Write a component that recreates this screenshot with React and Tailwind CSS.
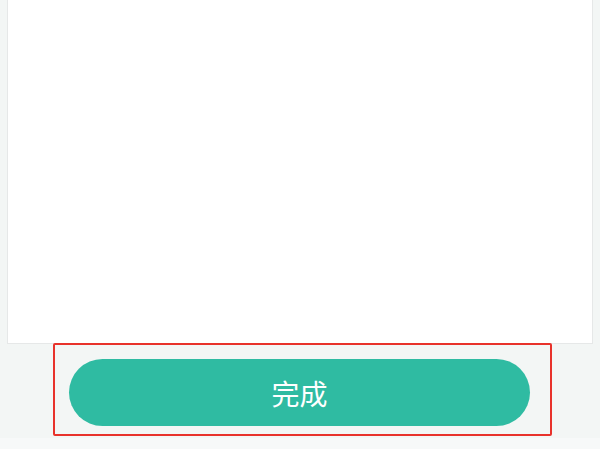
export default function App() {
  return (
    <div className="w-[600px] h-[449px] bg-[#f3f6f5] overflow-hidden flex flex-col" style={{ fontFamily: '"Noto Sans CJK SC", "Noto Sans", sans-serif' }}>
      <div className="mx-[7px] h-[344px] shrink-0 bg-white border border-t-0 border-[#e6e8e8]" />
      <div className="ml-[53px] -mt-px w-[499px] h-[93px] shrink-0 border-2 border-[#e8322b] rounded-[2px] px-[14px] pt-[14px]">
        <div className="w-[461px] h-[67px] rounded-full bg-[#2fbba2] flex items-center justify-center text-white text-[28px] leading-none">
          完成
        </div>
      </div>
      <div className="flex-1 mt-[2px] bg-[#f7f9f9]" />
    </div>
  );
}
